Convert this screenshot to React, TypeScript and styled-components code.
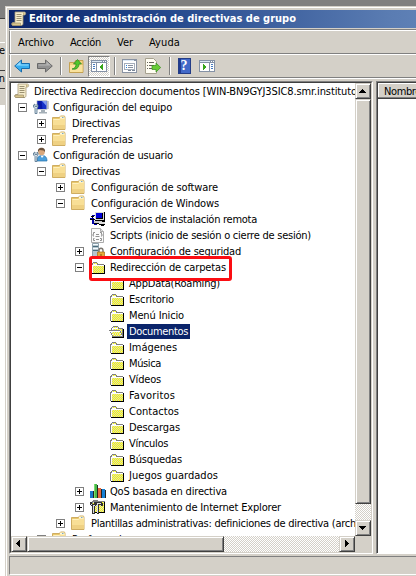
import React, { useLayoutEffect, useRef, useState } from 'react';
import styled, { createGlobalStyle, css } from 'styled-components';

const Global = createGlobalStyle`
  * { box-sizing: border-box; }
  body { margin: 0; background: #808080; overflow: hidden; }
`;

const Desktop = styled.div`
  width: 416px; height: 576px; overflow: hidden; display: flex;
  font: 11px/16px "DejaVu Sans Condensed", "DejaVu Sans", sans-serif;
  font-stretch: condensed; color: #000; background: #d4d0c8;
`;

/* Sliver of the window that sits behind the editor */
const Behind = styled.div`width: 5px; display: flex; flex-direction: column; flex: none;`;
const Slab = styled.div<{ $h: number; $bg?: string }>`
  height: ${p => p.$h}px; background: ${p => p.$bg || '#d4d0c8'}; flex: none; overflow: hidden;
  white-space: nowrap; direction: rtl;
`;

const Frame = styled.div`flex: 1; min-width: 0; display: flex; flex-direction: column; background: #d4d0c8;`;
const Above = styled.div`height: 6px; background: #808080; flex: none;`;
const Window = styled.div`
  flex: 1; min-height: 0; width: 440px; display: flex; flex-direction: column;
  border-top: 1px solid #d4d0c8; border-left: 1px solid #d4d0c8;
`;
const Inner = styled.div`
  flex: 1; display: flex; flex-direction: column; border-top: 1px solid #fff; border-left: 1px solid #fff;
  padding: 2px 0 0 2px; min-height: 0;
`;
const TitleBar = styled.div`
  height: 18px; flex: none; display: flex; align-items: center; padding-left: 2px; gap: 2px;
  background: linear-gradient(90deg, #0a246a 0, #20448a 140px, #5a7cb2 380px, #6385ba 440px);
  color: #fff; font-weight: bold;
`;
const Bar = styled.div<{ $h: number }>`
  height: ${p => p.$h}px; flex: none; display: flex; align-items: center;
  border-left: 1px solid #808080; border-top: 1px solid #fff; border-bottom: 1px solid #808080;
  box-shadow: inset 1px 0 #fff;
`;
const MenuBar = styled(Bar)`padding: 1px 0 0 8px;`;
const MenuItem = styled.div<{ $w: number }>`width: ${p => p.$w}px; flex: none;`;
const Tool = styled.div<{ $l: number; $active?: boolean }>`
  margin-left: ${p => p.$l}px; height: 21px; display: flex; align-items: center; justify-content: center; flex: none;
  width: ${p => (p.$active ? 22 : 16)}px;
  ${p => p.$active && css`
    border: 1px solid #808080; border-right-color: #fff; border-bottom-color: #fff;
    background: repeating-conic-gradient(#fff 0 25%, #d4d0c8 0 50%) 0 0 / 2px 2px;
  `}
`;
const Divider = styled.div<{ $l: number }>`
  width: 2px; height: 18px; margin-left: ${p => p.$l}px; background: #808080; border-right: 1px solid #fff; flex: none;
`;

const Label = styled.span<{ $selected?: boolean }>`
  white-space: pre; display: inline-block; padding: 0 2px; line-height: 15px; height: 15px;
  ${p => p.$selected && css`background: #0a246a; color: #fff;`}
`;
const Fitted = styled.span`white-space: pre; display: inline-block;`;

/* Spaces the letters so that the text takes the given width */
const Fit = ({ w, children }: { w: number; children: string }) => {
  const ref = useRef<HTMLSpanElement>(null);
  const [spacing, setSpacing] = useState(0);
  useLayoutEffect(() => {
    if (ref.current) setSpacing((w - ref.current.getBoundingClientRect().width) / children.length);
  }, [w, children]);
  return <Fitted ref={ref} style={{ letterSpacing: spacing }}>{children}</Fitted>;
};

const Content = styled.div`display: flex; height: 473px; margin-top: 2px; flex: none;`;
const TreePane = styled.div`
  width: 364px; flex: none; border: 1px solid #808080; border-right-color: #fff; border-bottom-color: #fff;
`;
const TreeInner = styled.div`
  height: 100%; border: 1px solid #404040; border-right-color: #d4d0c8; border-bottom-color: #d4d0c8;
  display: grid; grid-template-columns: 344px 16px; grid-template-rows: 453px 16px; background: #d4d0c8;
`;
const Tree = styled.div`background: #fff; overflow: hidden;`;
const Row = styled.div<{ $depth: number }>`
  height: 16px; display: flex; align-items: center; white-space: nowrap;
  padding-left: ${p => (p.$depth ? p.$depth * 19 - 12 : 3)}px;
`;
const Toggle = styled.span`width: 9px; height: 16px; margin-right: 6px; flex: none; display: flex; align-items: center;`;
const IconSlot = styled.span`width: 16px; height: 16px; flex: none; margin-right: 2px; display: flex;`;

const Raised = styled.div<{ $w: number; $h: number }>`
  width: ${p => p.$w}px; height: ${p => p.$h}px; flex: none; background: #d4d0c8;
  border: 1px solid #d4d0c8; border-right-color: #404040; border-bottom-color: #404040;
  box-shadow: inset 1px 1px #fff, inset -1px -1px #808080;
  display: flex; align-items: center; justify-content: center;
`;
const Track = styled.div<{ $vertical?: boolean }>`
  display: flex; flex-direction: ${p => (p.$vertical ? 'column' : 'row')};
  background: repeating-conic-gradient(#fff 0 25%, #d4d0c8 0 50%) 0 0 / 2px 2px;
`;
const Gap = styled.div`flex: 1;`;

const ListPane = styled.div`
  flex: 1; margin-left: 3px; background: #fff; border: 1px solid #808080; border-bottom-color: #fff;
  box-shadow: inset 1px 1px #404040; padding: 1px 0 0 1px;
`;
const ListHeader = styled.div`
  height: 16px; background: #d4d0c8; border-bottom: 1px solid #404040; padding-left: 6px; line-height: 18px;
  box-shadow: inset 0 -1px #808080, inset 1px 1px #fff;
`;
const Status = styled.div`
  height: 19px; margin-top: 1px; flex: none; border: 1px solid #808080; border-bottom-color: #fff;
`;

const Highlight = styled.div`
  position: absolute; left: 89px; top: 256px; width: 143px; height: 25px;
  border: 3px solid #fb0d12; border-radius: 3px;
`;

const Svg = ({ children, crisp }: { children: React.ReactNode; crisp?: boolean }) => (
  <svg width="16" height="16" viewBox="0 0 16 16" shapeRendering={crisp ? 'crispEdges' : 'auto'}>{children}</svg>
);

const Scroll = () => (
  <Svg>
    <path d="M4 1h9.500c1.500 0 1.500 3 0 3H12v8.500c0 1.500-1 2-2 2H2c-1.500 0-1.500-3 0-3h2z" fill="#f5eccb" stroke="#a79b78" strokeWidth=".8" />
    <path d="M1 12h8.500v1.500c0 1 .5 1.500 1 1H2c-1 0-1.500-1-1-2.500z" fill="#d9c68e" stroke="#8e8262" strokeWidth=".6" />
    <path d="M5.500 3.500h5M5.500 5.500h5M5.500 7.500h5M5.500 9.500h5" stroke="#9b9171" />
    <path d="M12 1.500c2-.5 2.500 2.500 0 2.500z" fill="#c9b581" />
  </Svg>
);
const Folder = () => (
  <Svg>
    <path d="M.5 14.500v-12h7l1-1.500h4l.5 1.500v12z" fill="#e9c86d" stroke="#cba758" strokeWidth=".9" />
    <path d="M8 1.500h4.500v1.500h-4.500z" fill="#fff8df" />
    <path d="M10 2h1.500v1H10z" fill="#79a9c8" />
    <path d="M1 4h6l1-1h5v11H1z" fill="#f8df96" />
    <path d="M1 10h12v4H1z" fill="#efd183" />
    <path d="M1.500 4.500h6l1-1h4" stroke="#fff0bd" fill="none" />
  </Svg>
);

/* Yellow area dithered with grey, row by row */
const Hatch = ({ x, y, w, h, tone = '#d8d8d8' }: { x: number; y: number; w: number; h: number; tone?: string }) => (
  <>
    <rect x={x} y={y} width={w} height={h} fill="#ffff00" />
    {Array.from({ length: h }, (_, r) => {
      let d = '';
      for (let c = r % 2; c < w; c += 2) d += `M${x + c} ${y + r}h1v1h-1z`;
      return <path key={r} d={d} fill={tone} />;
    })}
  </>
);
const OldFolder = () => (
  <Svg crisp>
    <path d="M1 5h1V4h1V3h4v1h1v1h6v9H1z" fill="#808080" />
    <path d="M2 6h12v8H2zM3 4h4v2H3z" fill="#fff" />
    <Hatch x={3} y={7} w={11} h={7} tone="#d6d6c0" />
    <Hatch x={3} y={4} w={4} h={1} />
    <path d="M14 6h1v9H2v-1h12z" fill="#000" />
  </Svg>
);
const OpenFolder = () => (
  <Svg crisp>
    <path d="M2 5h1V4h1V3h5v1h1v1h4v9H3V8H2z" fill="#808080" />
    <path d="M3 5h6v1h4v2H3z" fill="#fff" />
    <Hatch x={4} y={4} w={5} h={1} /><Hatch x={4} y={6} w={9} h={7} />
    <path d="M0 7h11v1h1v2h1v2h1v2H3v-2H2v-2H1V8H0z" fill="#808080" />
    <path d="M1 8h10v2h1v2h1v1H4v-1H3v-2H2V9H1z" fill="#fff" />
    <Hatch x={3} y={9} w={8} h={2} /><Hatch x={4} y={11} w={8} h={2} />
    <path d="M14 6h1v9H3v-1h11z" fill="#000" />
  </Svg>
);
const Wrench = () => (
  <path d="M.5 6v2l1.500 1.500V14.500h2V9.500L5 8V6L4 5v2.500H2V5z" fill="#d5e0e8" stroke="#52718b" strokeWidth=".8" />
);
const Computer = () => (
  <Svg>
    <path d="M4 1.500h10v9H4z" fill="#1632c8" stroke="#c6ccd2" />
    <path d="M9 2h4.500v5z" fill="#819bf0" /><path d="M4.500 2h4l1 8h-5z" fill="#0718a7" />
    <path d="M14.500 2h1v8h-1z" fill="#8b949a" />
    <path d="M8 11h4v2h2v1.500H6V13h2z" fill="#a5b0b8" /><Wrench />
  </Svg>
);
const User = () => (
  <Svg>
    <path d="M4 14c0-4 2-5.500 5-5.500s5 1.500 5 5.500z" fill="#4b9edb" stroke="#2370aa" strokeWidth=".7" />
    <path d="M7.500 8.500L9 11l2-2.500z" fill="#fff" />
    <circle cx="8.500" cy="5" r="3.300" fill="#d9a77c" />
    <path d="M5 5C4.500 2 6.500 .8 8.500 .8S12.500 2 12 5L10.500 3.500 6.500 3z" fill="#69503b" /><Wrench />
  </Svg>
);
const Remote = () => (
  <Svg crisp>
    <path d="M5 1h9v8H5z" fill="#d8d8d8" /><path d="M6 2h7v6H6z" fill="#000" /><path d="M6 2h6v5H6z" fill="#0000d8" />
    <path d="M14 1h1v8h-1zM5 9h10v1H5zM1 5h3v1H1zM2 6h1v2H2zM0 8h5v1H0z" fill="#000" />
    <path d="M0 7h4v1H0zM2 4h3v1H2z" fill="#0000a8" /><path d="M4 10h9v2H4z" fill="#c8c8c8" /><path d="M3 12h9v1H3zM12 10h3v2h-3z" fill="#000" />
    <path d="M9 11h6v2H9z" fill="#ddd" /><path d="M9 13h6v1H9zM11 14h3v1h-3z" fill="#000" /><path d="M2 9h2v4H2zM4 13h3v1H4z" fill="#0000a8" />
  </Svg>
);
const Script = () => (
  <Svg>
    <path d="M1.500 1.500h9l3 3v11h-12z" fill="#fafafa" stroke="#aaa" /><path d="M10.500 1.500v3h3" fill="#ddd" stroke="#aaa" />
    <path d="M5 5.500H3.500v2l-1 .5 1 .5v1M10 5.500h1.500v2l1 .5-1 .5v1M4.500 11.500H3.500v2h1.500M10 11.500h1.500v2H10M6 7.500h3M6 12.500h3M5.500 9.500h4" fill="none" stroke="#858585" strokeWidth=".9" />
  </Svg>
);
const Security = () => (
  <Svg>
    <path d="M2.500.5h6v14h-6z" fill="#b7c5cd" stroke="#8fa2ac" /><path d="M3 1h5v1H3zM3 5h5v1H3z" fill="#f3fbff" /><path d="M3 3.500h5M3 7.500h5" stroke="#466b7b" />
    <path d="M9 9V7.500c0-3 4-3 4 0V9" fill="none" stroke="#7c7770" strokeWidth="1.400" /><path d="M7.500 9h7v5.500h-7z" fill="#e5a83a" stroke="#a86b16" strokeWidth=".7" /><path d="M10.500 11h1v2h-1z" fill="#815011" />
  </Svg>
);
const Chart = () => (
  <Svg crisp>
    <path d="M0 8h3v7H0z" fill="#1877c9" /><path d="M4 1h3v14H4z" fill="#47b94b" /><path d="M4 1h1v14H4z" fill="#7bdc6b" />
    <path d="M8 5h3v10H8z" fill="#e2683f" /><path d="M12 6h3v9h-3z" fill="#1680d5" />
    <path d="M3 8h1v7H3zM7 2h1v13H7zM11 6h1v9h-1zM15 7h1v8h-1z" fill="#222" />
  </Svg>
);
const Maintenance = () => (
  <Svg crisp>
    <path d="M2 2h1V1h5v1h7v12H2z" fill="#808080" /><Hatch x={3} y={3} w={11} h={10} /><path d="M14 3h1v11H3v-1h11z" fill="#000" />
    <path d="M0 3h2v2h2V3h2v3L5 7v8H2V7L0 6zM6 3h6v1h1v3h-2V6H9v9H7V6H6z" fill="#333" />
    <path d="M1 4v2h4V4v2L4 7v7H3V7zM7 4h4v1H8v9H7z" fill="#ddd" />
  </Svg>
);
const Box = ({ open }: { open?: boolean }) => (
  <svg width="9" height="9" shapeRendering="crispEdges"><path d="M0 0h9v9H0z" fill="#808080" /><path d="M1 1h7v7H1z" fill="#fff" /><path d={open ? 'M2 4h5v1H2z' : 'M2 4h2V2h1v2h2v1H5v2H4V5H2z'} /></svg>
);

const Arrow = ({ blue, flip }: { blue?: boolean; flip?: boolean }) => (
  <Svg>
    <path transform={flip ? 'matrix(-1 0 0 1 16 0)' : undefined} d="M.7 8l6.800-6v3.500h8v5h-8V14z" fill={blue ? '#38aef0' : '#929292'} stroke={blue ? '#176cae' : '#696969'} />
    <path transform={flip ? 'matrix(-1 0 0 1 16 0)' : undefined} d="M2 7.500l4.500-4v3h8v1z" fill={blue ? '#91dcff' : '#b5b5b5'} />
  </Svg>
);
const UpFolder = () => (
  <Svg><path d="M.5 4.500h5l1-2h7.500v12H.5z" fill="#f4d47d" stroke="#bd963e" strokeWidth=".8" /><path d="M1 7h12.500v7H1z" fill="#f9e29d" />
    <path d="M3 11c3-.5 4-2.500 4-5H4.500L8.500 1.500l4 4.500H10c0 4-3 6-7 5z" fill="#50c52b" stroke="#278421" strokeWidth=".7" /></Svg>
);
const Panel = ({ right }: { right?: boolean }) => (
  <Svg crisp><path d="M0 2h16v12H0z" fill="#8592a6" /><path d="M1 5h14v8H1z" fill="#fff" /><path d="M1 3h10v1H1z" fill="#dce8f4" /><path d="M12 3h1v1h-1zM14 3h1v1h-1z" fill="#fff" />
    {right ? <><path d="M10 5h1v8h-1z" fill="#8592a6" /><path d="M12 6h2v1h-2zM12 8h2v1h-2zM12 10h2v1h-2z" fill="#477bc0" /><path d="M4 6l4 3-4 3z" fill="#36a51b" /></>
      : <><path d="M5 5h1v8H5z" fill="#8592a6" /><path d="M2 6h2v1H2zM2 8h2v1H2zM2 10h2v1H2z" fill="#477bc0" /><path d="M12 6L8 9l4 3z" fill="#36a51b" /></>}
  </Svg>
);
const Properties = () => (
  <Svg crisp><path d="M0 1h15v14H0z" fill="#8993a3" /><path d="M1 3h13v11H1z" fill="#fff" /><path d="M1 2h11v1H1z" fill="#dce8f4" /><path d="M2 5h11v7H2z" fill="#a5aebb" /><path d="M3 6h9v5H3z" fill="#fff" /><path d="M4 7h1v1H4zM4 9h1v1H4z" fill="#2882db" /><path d="M6 7h5v1H6zM6 9h5v1H6z" fill="#8791a0" /><path d="M6 12h3v1H6zM10 12h3v1h-3z" fill="#798596" /></Svg>
);
const Export = () => (
  <Svg><path d="M.5.5h8l3 3v12h-11z" fill="#fffdf2" stroke="#a6a18f" /><path d="M2 4.500h1M4 4.500h5M2 7.500h1M4 7.500h5M2 10.500h1M4 10.500h5" stroke="#67645b" /><path d="M7 7.500h4V5l4.700 4.500L11 14v-2.500H7z" fill="#68cc36" stroke="#368c20" strokeWidth=".7" /></Svg>
);
const HelpMark = styled.div`
  width: 13px; height: 16px; background: linear-gradient(90deg, #203b91 2px, #4269c8 2px); border: 1px solid #243d87;
  color: #fff; font: bold 14px/14px "Liberation Serif", serif; text-align: center;
`;
const Tri = ({ d }: { d: string }) => <svg width="8" height="8" shapeRendering="crispEdges"><path d={d} /></svg>;

type Item = { d: number; t: string; w: number; i: React.ReactNode; s?: 'open' | 'closed'; selected?: boolean };
const old = (t: string, w: number): Item => ({ d: 5, t, w, i: <OldFolder /> });
const items: Item[] = [
  { d: 1, s: 'open', i: <Computer />, t: 'Configuración del equipo', w: 119 },
  { d: 2, s: 'closed', i: <Folder />, t: 'Directivas', w: 48 },
  { d: 2, s: 'closed', i: <Folder />, t: 'Preferencias', w: 61 },
  { d: 1, s: 'open', i: <User />, t: 'Configuración de usuario', w: 120 },
  { d: 2, s: 'open', i: <Folder />, t: 'Directivas', w: 48 },
  { d: 3, s: 'closed', i: <Folder />, t: 'Configuración de software', w: 127 },
  { d: 3, s: 'open', i: <Folder />, t: 'Configuración de Windows', w: 128 },
  { d: 4, i: <Remote />, t: 'Servicios de instalación remota', w: 147 },
  { d: 4, i: <Script />, t: 'Scripts (inicio de sesión o cierre de sesión)', w: 201 },
  { d: 4, s: 'closed', i: <Security />, t: 'Configuración de seguridad', w: 131 },
  { d: 4, s: 'open', i: <OldFolder />, t: 'Redirección de carpetas', w: 116 },
  old('AppData(Roaming)', 91), old('Escritorio', 45), old('Menú Inicio', 55),
  { d: 5, i: <OpenFolder />, t: 'Documentos', w: 59, selected: true },
  old('Imágenes', 48), old('Música', 32), old('Vídeos', 32), old('Favoritos', 46), old('Contactos', 50),
  old('Descargas', 51), old('Vínculos', 39), old('Búsquedas', 53), old('Juegos guardados', 89),
  { d: 4, s: 'closed', i: <Chart />, t: 'QoS basada en directiva', w: 117 },
  { d: 4, s: 'closed', i: <Maintenance />, t: 'Mantenimiento de Internet Explorer', w: 171 },
  { d: 3, s: 'closed', i: <Folder />, t: 'Plantillas administrativas: definiciones de directiva (arch', w: 265 },
  { d: 2, s: 'closed', i: <Folder />, t: 'Preferencias', w: 61 },
];

export default function App() {
  return (
    <Desktop>
      <Global />
      <Behind>
        <Slab $h={18} $bg="#808080" /><Slab $h={1} $bg="#404040" /><Slab $h={23} /><Slab $h={1} $bg="#fff" />
        <Slab $h={27}>e</Slab><Slab $h={1} $bg="#404040" /><Slab $h={17}>n</Slab><Slab $h={1} $bg="#404040" />
        <Slab $h={16} /><Slab $h={471} $bg="#fff" />
      </Behind>
      <Frame>
        <Above />
        <Window><Inner>
          <TitleBar><Scroll /><Fit w={267}>Editor de administración de directivas de grupo</Fit></TitleBar>
          <Slab $h={1} /><Slab $h={1} $bg="#808080" />
          <MenuBar $h={24}>
            <MenuItem $w={52}><Fit w={36}>Archivo</Fit></MenuItem><MenuItem $w={47}><Fit w={31}>Acción</Fit></MenuItem>
            <MenuItem $w={32}><Fit w={16}>Ver</Fit></MenuItem><MenuItem $w={40}><Fit w={31}>Ayuda</Fit></MenuItem>
          </MenuBar>
          <Bar $h={24}>
            <Tool $l={4}><Arrow blue /></Tool><Tool $l={7}><Arrow flip /></Tool><Divider $l={7} />
            <Tool $l={7}><UpFolder /></Tool><Tool $l={3} $active><Panel /></Tool><Divider $l={4} />
            <Tool $l={6}><Properties /></Tool><Tool $l={7}><Export /></Tool><Divider $l={8} />
            <Tool $l={5}><HelpMark>?</HelpMark></Tool><Tool $l={7}><Panel right /></Tool>
          </Bar>
          <Slab $h={1} $bg="#fff" />
          <Content>
            <TreePane><TreeInner>
              <Tree>
                <Row $depth={0}><IconSlot><Scroll /></IconSlot><Label><Fit w={323}>Directiva Redireccion documentos [WIN-BN9GYJ3SIC8.smr.instituto</Fit></Label></Row>
                {items.map((it, n) => (
                  <Row key={n} $depth={it.d}>
                    <Toggle>{it.s && <Box open={it.s === 'open'} />}</Toggle>
                    <IconSlot>{it.i}</IconSlot>
                    <Label $selected={it.selected}><Fit w={it.w}>{it.t}</Fit></Label>
                  </Row>
                ))}
              </Tree>
              <Track $vertical><Raised $w={16} $h={16}><Tri d="M3 2h1v1h1v1h1v1h1v1H0V5h1V4h1V3h1z" /></Raised><Raised $w={16} $h={405} /><Gap /><Raised $w={16} $h={16}><Tri d="M0 2h7v1H6v1H5v1H4v1H3V5H2V4H1V3H0z" /></Raised></Track>
              <Track><Raised $w={16} $h={16}><Tri d="M5 0v7H4V6H3V5H2V4H1V3h1V2h1V1h1V0z" /></Raised><Raised $w={197} $h={16} /><Gap /><Raised $w={16} $h={16}><Tri d="M2 0h1v1h1v1h1v1h1v1H5v1H4v1H3v1H2z" /></Raised></Track>
            </TreeInner></TreePane>
            <ListPane><ListHeader><Fit w={37}>Nombre</Fit></ListHeader></ListPane>
          </Content>
          <Slab $h={1} />
          <Status />
        </Inner></Window>
      </Frame>
      <Highlight />
    </Desktop>
  );
}
